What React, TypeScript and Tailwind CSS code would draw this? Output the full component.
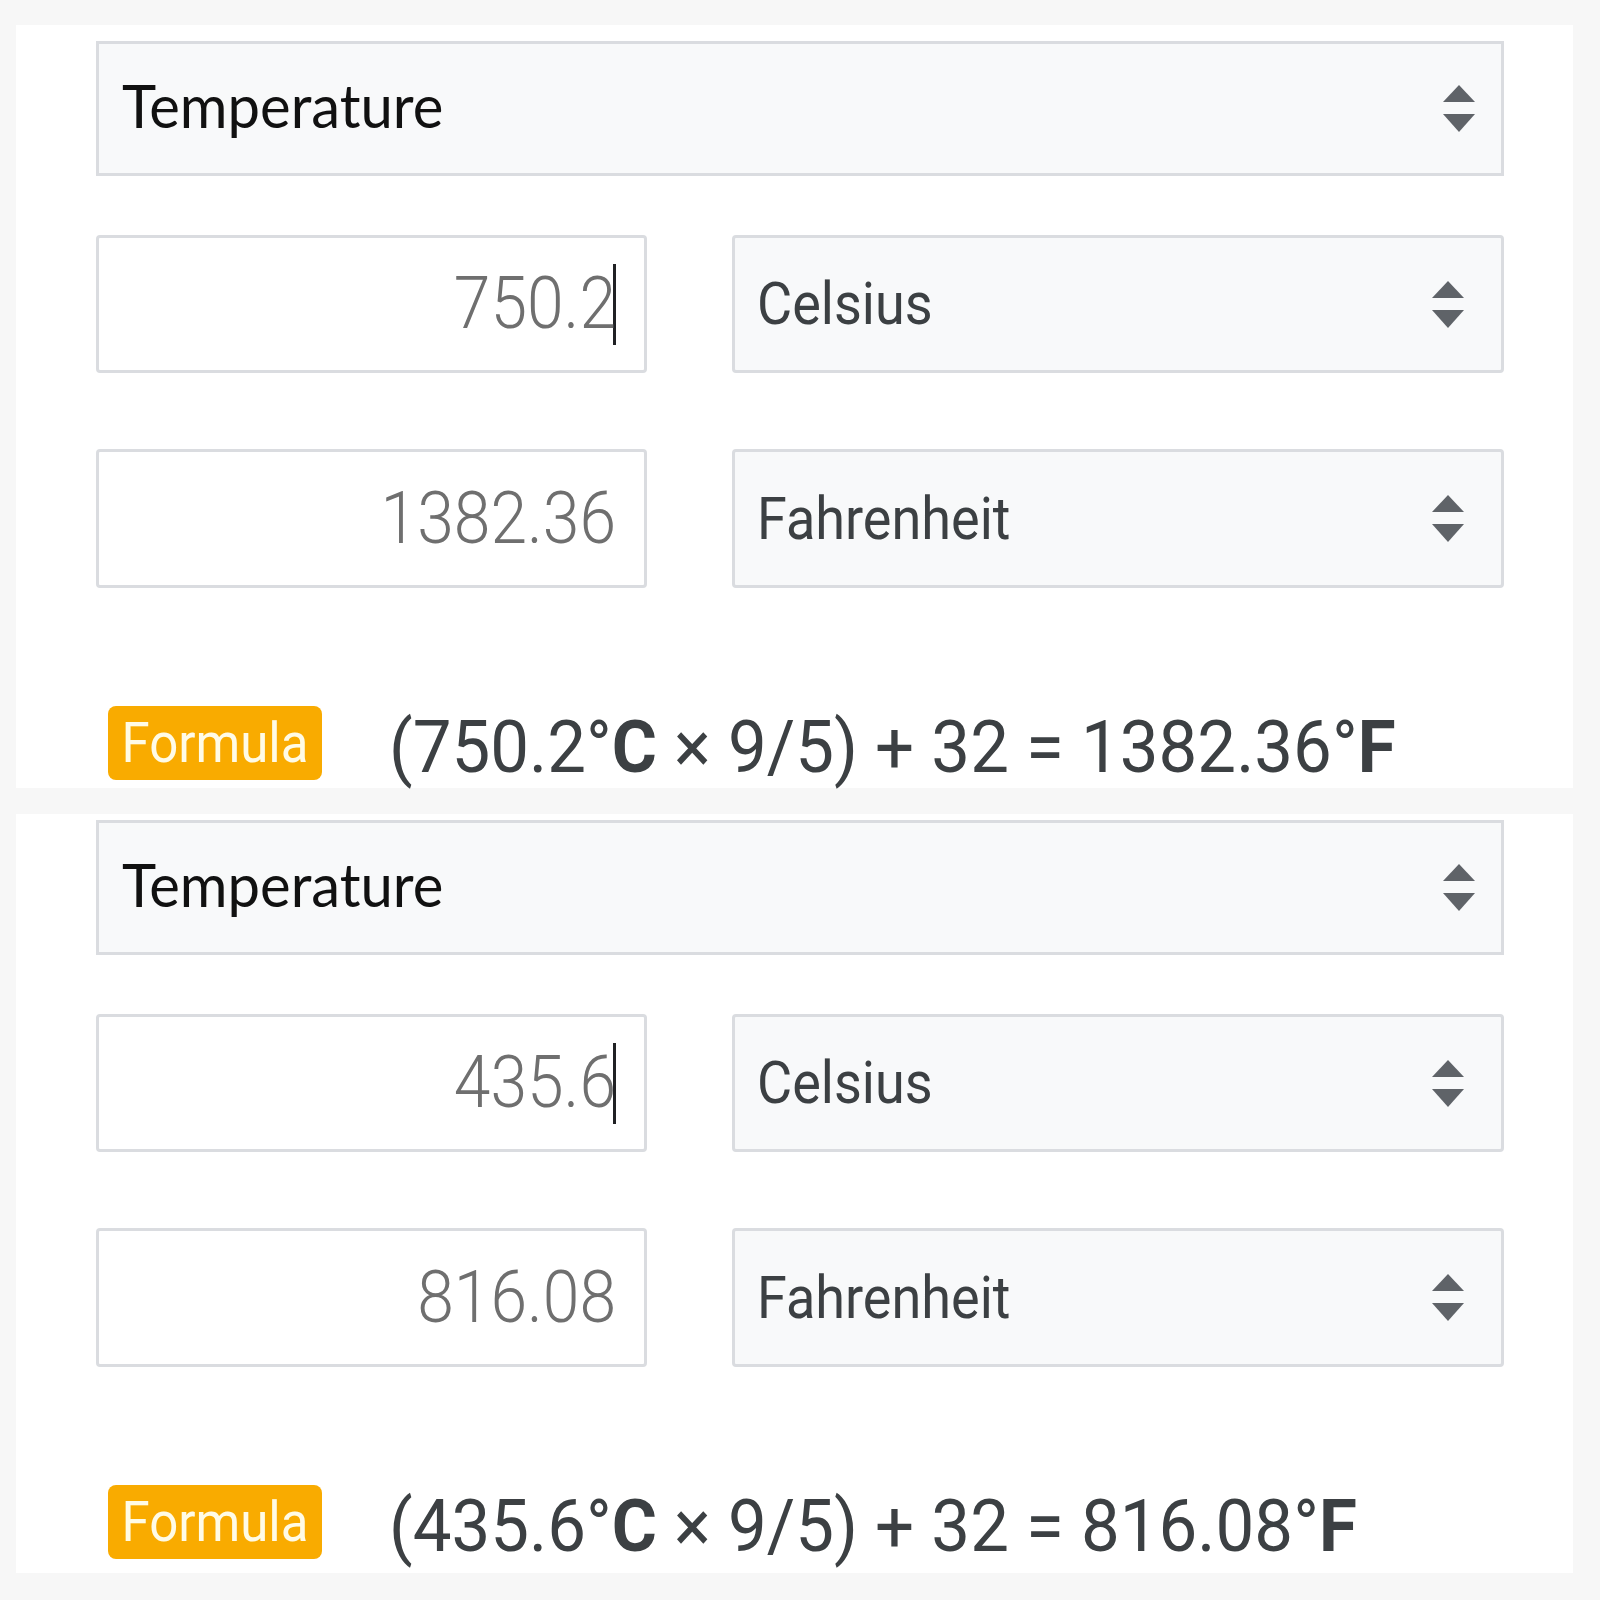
const Arrows = ({ className = '' }: { className?: string }) => (
  <svg viewBox="0 0 32 47" className={`h-[47px] w-[32px] shrink-0 ${className}`}>
    <polygon points="16,0 32,17 0,17" fill="#5f6368" />
    <polygon points="0,29 32,29 16,47" fill="#5f6368" />
  </svg>
);

const Stretch = ({ children, className = '' }: { children: React.ReactNode; className?: string }) => (
  <span className={`inline-block origin-center leading-none ${className}`}>{children}</span>
);

type Conv = { from: string; to: string; typing?: boolean };

const Converter = ({ data, top, bottom }: { data: Conv; top: string; bottom: string }) => (
  <section className={`ml-[16px] w-[1557px] bg-white pl-[80px] pr-[69px] ${top} ${bottom}`}>
    <div className="flex h-[135px] items-center justify-between border-[3px] border-[#dadce0] bg-[#f8f9fa] pl-[23px] pr-[26px]">
      <Stretch className="mb-[8px] scale-y-[1.05] font-['Lato'] text-[58px] text-[#111]">Temperature</Stretch>
      <Arrows />
    </div>

    <div className="mt-[59px] flex gap-[85px]">
      <div className="flex h-[138px] w-[551px] items-center justify-end rounded-[4px] border-[3px] border-[#dadce0] bg-white pr-[28px]">
        <Stretch className="scale-y-[1.1] text-[66px] font-light text-[#6f6f6f]">{data.from}</Stretch>
        {data.typing && <span className="-ml-[3px] h-[81px] w-[3px] bg-[#202124]" />}
      </div>
      <div className="flex h-[138px] flex-1 items-center justify-between rounded-[4px] border-[3px] border-[#dadce0] bg-[#f8f9fa] pl-[22px] pr-[37px]">
        <Stretch className="scale-y-[1.1] text-[54px] text-[#3c4043]">Celsius</Stretch>
        <Arrows />
      </div>
    </div>

    <div className="mt-[76px] flex gap-[85px]">
      <div className="flex h-[139px] w-[551px] items-center justify-end rounded-[4px] border-[3px] border-[#dadce0] bg-white pr-[28px]">
        <Stretch className="scale-y-[1.1] text-[66px] font-light text-[#6f6f6f]">{data.to}</Stretch>
      </div>
      <div className="flex h-[139px] flex-1 items-center justify-between rounded-[4px] border-[3px] border-[#dadce0] bg-[#f8f9fa] pl-[22px] pr-[37px]">
        <Stretch className="scale-y-[1.1] text-[54px] text-[#3c4043]">Fahrenheit</Stretch>
        <Arrows />
      </div>
    </div>

    <div className="mt-[118px] flex h-[74px] items-center">
      <div className="ml-[12px] flex h-[74px] w-[214px] items-center justify-center rounded-[8px] bg-[#f9ab00]">
        <Stretch className="scale-y-[1.08] text-[51px] text-[#fffbe6]">Formula</Stretch>
      </div>
      <p className="ml-[67px] mt-[8px] leading-none text-[#3c4043]">
        <Stretch className="scale-y-[1.06] text-[69px]">
          ({data.from}°<b>C</b> × 9/5) + 32 = {data.to}°<b>F</b>
        </Stretch>
      </p>
    </div>
  </section>
);

export default function App() {
  return (
    <div className="min-h-[1600px] bg-[#f7f7f7] pt-[25px] font-['Roboto',sans-serif]">
      <Converter data={{ from: '750.2', to: '1382.36', typing: true }} top="pt-[16px]" bottom="pb-[8px]" />
      <div className="h-[26px]" />
      <Converter data={{ from: '435.6', to: '816.08', typing: true }} top="pt-[6px]" bottom="pb-[14px]" />
    </div>
  );
}
